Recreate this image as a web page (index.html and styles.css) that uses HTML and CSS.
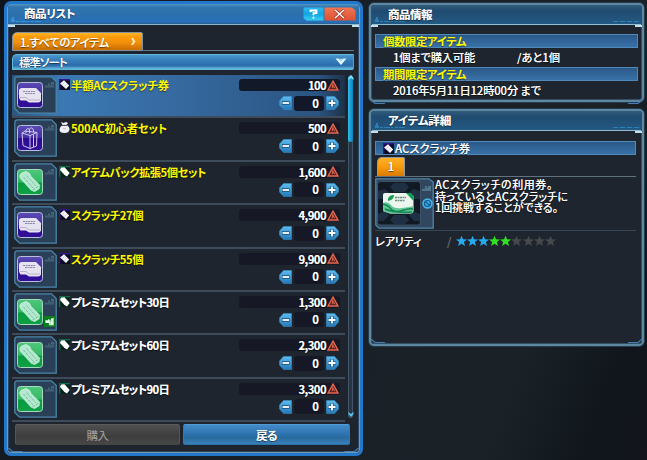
FILE: index.html
```html
<!DOCTYPE html>
<html lang="ja">
<head>
<meta charset="utf-8">
<title>商品リスト</title>
<link rel="stylesheet" href="styles.css">
</head>
<body>
<svg class="defs" width="0" height="0">
  <defs>
    <linearGradient id="gp" x2="0" y2="1"><stop offset="0" stop-color="#5b4bb5"/><stop offset=".5" stop-color="#43309f"/><stop offset=".52" stop-color="#2c0a92"/><stop offset="1" stop-color="#32109a"/></linearGradient>
    <linearGradient id="gg" x2="0" y2="1"><stop offset="0" stop-color="#4fc77b"/><stop offset=".5" stop-color="#35b866"/><stop offset=".54" stop-color="#089a3e"/><stop offset="1" stop-color="#0fa145"/></linearGradient>
    <linearGradient id="gb" x2="0" y2="1"><stop offset="0" stop-color="#5cbcf0"/><stop offset="1" stop-color="#2478b8"/></linearGradient>
    <symbol id="frame" viewBox="0 0 43 38">
      <path d="M.8 3.5Q.8.8 3.5.8H37.5L42.2 5.500V37.200H5.500L.8 32.500Z" fill="#2a3f58" stroke="#4a86aa" stroke-width="1.300"/>
      <path d="M31 11.500V9.500H34V7.500H36V9H37V6H40V11.500Z" fill="#45657a"/>
      <path d="M32 10H40M35 8.500H40" stroke="#2f4b60" stroke-width=".6"/>
    </symbol>
    <symbol id="card" viewBox="0 0 43 38">
      <use href="#frame"/>
      <rect x="3.500" y="6.500" width="25" height="25" rx="3" fill="url(#gp)" stroke="#b9bedb"/>
      <path d="M5 14Q5.500 12 8 12H22L27 17V24.500Q26.500 26.500 24 26.500H15L12 24.500H6.500L5 22Z" fill="#e6e3f0"/>
      <path d="M9 15.500H21M11 17.500H21" stroke="#8b83a8" stroke-width="1" stroke-dasharray="2 .6"/>
      <path d="M6 21.500H12L15 24H26" fill="none" stroke="#b8b1ce" stroke-width="1"/>
    </symbol>
    <symbol id="bag" viewBox="0 0 43 38">
      <use href="#frame"/>
      <rect x="3.500" y="6.500" width="25" height="25" rx="3" fill="url(#gp)" stroke="#b9bedb"/>
      <path d="M8 14L11 12L23 13.500L22.500 27L16 29.500L9 26.500ZM8 14L16 16.500V29.500M16 16.500L23 13.500M19.500 15.500V28M12 14V11Q13.500 8 15.500 10.500V14.500M15 10.500Q17.500 7 19.500 11V13" fill="none" stroke="#d6d2ef" stroke-width=".95"/>
    </symbol>
    <symbol id="ticket" viewBox="0 0 43 38">
      <use href="#frame"/>
      <rect x="3.500" y="6.500" width="25" height="25" rx="3" fill="url(#gg)" stroke="#a9d9be"/>
      <path d="M5.500 13.500L7 10.500L12 8.500L15.500 10.500L17 13.500L26 22.500L25.500 26L20.500 29L17 27.500L6 15.500Z" fill="#b4e9d0"/>
      <path d="M9.500 14L19 25M12.500 12.500L22 23M18.500 27L25 23" stroke="#78bfa0" stroke-width="1" stroke-dasharray="3 1"/>
      <path d="M5.500 13.500L7 10.500L12 8.500L15.500 10.500L17 13.500L26 22.500" fill="none" stroke="#d6f7e7" stroke-width=".8"/>
    </symbol>
    <symbol id="gift" viewBox="0 0 12 12"><path d="M0 0H12V12H0Z" fill="#0a7d1c"/><path d="M1.500 4.500H4.500V3.500H6V5H7.500V3L10.500 2V10H5.500V7.500H1.500Z" fill="#e9fff0"/><path d="M7 5.500V10M6 5.500H10.500" stroke="#7bc08b" stroke-width=".6"/></symbol>
    <symbol id="tagp" viewBox="0 0 11 11"><path d="M0 0H11V11H0Z" fill="#0c0a1d"/><path d="M.7 11V.7H11" fill="none" stroke="#31158a" stroke-width="1.500"/><path d="M1 4.500L5 1.200L10.200 6.500L7 10Z" fill="#f6f4ff"/><path d="M5.500 3.500L3.500 5.500M7.500 5.500L5.500 7.500" stroke="#b8aed0" stroke-width=".7"/></symbol>
    <symbol id="tagg" viewBox="0 0 11 11"><path d="M0 0H11V11H0Z" fill="#08231b"/><path d="M.7 11V.7H11" fill="none" stroke="#087047" stroke-width="1.300"/><path d="M1 4L2 1.500L5.500 1.200L10.700 7L8 10.500L5.500 9Z" fill="#fff"/></symbol>
    <symbol id="pouch" viewBox="0 0 11 11"><path d="M2 0L4.500 1L7 0L9 1L7.500 3Q10.500 4.500 10.500 7.500Q10 11 5.500 11Q.5 11 .5 7.500Q.5 5 3.500 3Z" fill="#f1f0f6"/><path d="M3 3.400H8" stroke="#2a283a" stroke-width=".9"/><path d="M4 6L5.500 7L7 6" stroke="#9d99aa" fill="none" stroke-width=".7"/></symbol>
    <symbol id="ac" viewBox="0 0 12 11"><path d="M6 1.200L10.900 10H1.100Z" fill="#41191c" stroke="#e66850" stroke-width="1.400"/><path d="M6 3.500L5 8.500M6 5L8 8.500M5 7H7" stroke="#e66850" stroke-width=".9"/></symbol>
    <symbol id="minus" viewBox="0 0 13 14"><path d="M4.500 .5H12.500V13.500H4.500L.5 9V5Z" fill="url(#gb)" stroke="#3d98cf" stroke-width=".5"/><path d="M3 7H10.500" stroke="#174e7a" stroke-width="3.500"/><path d="M3.500 7H10" stroke="#fff" stroke-width="1.800"/></symbol>
    <symbol id="plus" viewBox="0 0 13 14"><path d="M.5 .5H8.500L12.500 5V9L8.500 13.500H.5Z" fill="url(#gb)" stroke="#3d98cf" stroke-width=".5"/><path d="M2 7H10M6 3V11" stroke="#174e7a" stroke-width="3.200"/><path d="M2.500 7H9.500M6 3.500V10.500" stroke="#fff" stroke-width="1.800"/></symbol>
    <symbol id="star" viewBox="0 0 12 12"><path d="M6 .2L7.600 4.100L12 4.400L8.600 7.100L9.700 11.500L6 9.100L2.300 11.500L3.400 7.100L0 4.400L4.400 4.100Z"/></symbol>
    <symbol id="deco" viewBox="0 0 32 8"><path d="M1 7V4H2V2H4V5H5V7Z" fill="#3a9bd8" opacity=".8"/><path d="M6 6.500H31" stroke="#39a0dc" stroke-width="1" stroke-dasharray="3 1 6 1 2 2" opacity=".8"/></symbol>
  </defs>
</svg>

<main class="screen">
  <section class="window shop">
    <header class="titlebar"><svg class="deco"><use href="#deco"/></svg><h1><span data-w="51">商品リスト</span></h1>
      <svg class="winbtns" viewBox="0 0 53 14">
        <defs><linearGradient id="hc" x2="0" y2="1"><stop stop-color="#2fb9f0"/><stop offset=".5" stop-color="#16a4e4"/><stop offset="1" stop-color="#35d2f5"/></linearGradient>
        <linearGradient id="hr" x2="0" y2="1"><stop stop-color="#f07551"/><stop offset="1" stop-color="#dc5132"/></linearGradient></defs>
        <path d="M.5 .5H20.500V13.500H3.500L.5 11Z" fill="url(#hc)"/><path d="M21.500 .5H49L52.500 3.500V13.500H21.500Z" fill="url(#hr)"/>
        <path d="M32 3L41 11M41 3L32 11" stroke="#922f25" stroke-width="3"/><path d="M32 3L41 11M41 3L32 11" stroke="#fff" stroke-width="1.500"/>
        <path d="M7.500 5V3.500H13.500V6.200H10.500V8.200M10.500 9.700V11.500" fill="none" stroke="#fff" stroke-width="1.800"/>
      </svg>
    </header>
    <div class="tabs"><div class="tab"><span data-w="89">1.すべてのアイテム</span><svg viewBox="0 0 5 7"><path d="M0 0L2 0L4.500 3.500L2 7H0L2 3.500Z" fill="#ffe9bb"/></svg></div></div>
    <div class="sort"><span data-w="48">標準ソート</span><svg viewBox="0 0 12 8"><path d="M.5 .5H3.500L6 3L8.500 .5H11.500L6 7Z" fill="#e8faff"/><path d="M3 .8H9L6 3.500Z" fill="#9fdcf5"/></svg></div>
    <div class="listwrap">
      <ul class="list" id="list"></ul>
      <div class="scroll"><i class="thumb"></i><svg class="up" viewBox="0 0 6 5"><path d="M.5 5L3 3L5.500 5V3L3 0L.5 3Z" fill="#7fe0fa"/></svg><svg class="down" viewBox="0 0 6 5"><path d="M.5 0L3 2L5.500 0V2L3 5L.5 2Z" fill="#4fc9f0"/></svg></div>
    </div>
    <footer class="actions"><button class="buy"><span data-w="22">購入</span></button><button class="back"><span data-w="21">戻る</span></button></footer>
    <svg class="corners" viewBox="0 0 352 5"><path d="M1 0L5 3.500H15M351 0L347 3.500H337" fill="none" stroke="#467db6" stroke-width="1.200"/></svg>
  </section>

  <div class="side">
    <section class="window pane info">
      <header class="titlebar"><svg class="deco"><use href="#deco"/></svg><h2><span data-w="44">商品情報</span></h2><i class="dots"></i></header>
      <div class="body">
        <div class="band yellow"><span data-w="83">個数限定アイテム</span></div>
        <p class="line"><span data-w="82">1個まで購入可能</span><span class="rest"><span data-w="43">/あと1個</span></span></p>
        <div class="band yellow"><span data-w="83">期間限定アイテム</span></div>
        <p class="line"><span data-w="148">2016年5月11日12時00分 まで</span></p>
      </div>
      <svg class="corners" viewBox="0 0 272 5"><path d="M0 0L4 3.500H14M272 0L268 3.500H258" fill="none" stroke="#467db6" stroke-width="1.200"/></svg>
    </section>
    <section class="window pane detail">
      <header class="titlebar"><svg class="deco"><use href="#deco"/></svg><h2><span data-w="63">アイテム詳細</span></h2><i class="dots"></i></header>
      <div class="body">
        <div class="band item"><svg class="tag"><use href="#tagp"/></svg><span data-w="75">ACスクラッチ券</span></div>
        <div class="pages"><div class="page">1</div></div>
        <div class="desc">
          <svg class="preview" viewBox="0 0 59 51">
            <path d="M.8 .8H54L58.200 4V50.200H4L.8 47Z" fill="#30475f" stroke="#5186a8" stroke-width="1.300"/>
            <rect x="2.500" y="3.500" width="43" height="43.500" rx="3" fill="#111925" stroke="#3e5268"/>
            <path d="M15 9L19 5H30L34 9L30 14H19ZM3 13L10 11L14 15L10 21H3ZM45 13L38 11L34 15L38 21H45ZM15 42L19 37H30L34 42L30 46H19ZM3 36L10 33L14 37L9 43H3ZM45 36L38 33L34 37L39 43H45Z" fill="#203044"/>
            <path d="M8 17Q8 15 10 15H35L38.500 18V33Q38 35 36 35.500H15L8 33Z" fill="#edf5ef"/>
            <path d="M8 25Q13 23 16 27T27 30T38.500 28V33Q38 35 36 35.500H15L8 33Z" fill="#64c895"/>
            <path d="M8 26Q13 27 16 31T27 32.500T38 31M10 31Q18 35 37 34" fill="none" stroke="#138658" stroke-width="1.500"/>
            <path d="M13 21Q14 17 19 17Q19 22 13 23ZM31 15H36L38.500 18V23Z" fill="#159b52"/>
            <path d="M20 19.500H31M20 22.500H30" stroke="#6e8f7b" stroke-width="1.300" stroke-dasharray="2 .5"/>
            <circle cx="52.500" cy="25.500" r="5.200" fill="#43b4ec"/><circle cx="52.500" cy="25.500" r="3" fill="none" stroke="#14588b" stroke-width="1.200"/><path d="M50.500 23.500L54.500 27.500" stroke="#14588b" stroke-width="1.200"/>
            <path d="M47 13V11H50V8H52V10H53V8H56V13Z" fill="#50758a"/>
          </svg>
          <p class="text"><span data-w="118">ACスクラッチの利用券。</span><span data-w="133">持っているとACスクラッチに</span><span data-w="123">1回挑戦することができる。</span></p>
        </div>
        <div class="rarity"><span class="label"><span data-w="46">レアリティ</span></span><span class="slash">/</span><div class="stars" id="stars"></div></div>
      </div>
      <svg class="corners" viewBox="0 0 272 5"><path d="M0 0L4 3.500H14M272 0L268 3.500H258" fill="none" stroke="#467db6" stroke-width="1.200"/></svg>
    </section>
  </div>
</main>
<script src="app.js"></script>
</body>
</html>
```
FILE: styles.css
```css
* { box-sizing: border-box; }
body {
  margin: 0; width: 647px; height: 460px; overflow: hidden; color: #fff;
  font: 500 11.3px/16px "Noto Sans CJK JP", "Liberation Sans", sans-serif;
  background: linear-gradient(110deg, #10151b 0%, #191f26 45%, #1a2228 80%, #10161c 92%, #14151d 100%);
}
h1, h2, p, ul { margin: 0; padding: 0; }
span { white-space: nowrap; }
[data-w] { display: inline-block; }
svg { display: block; flex: none; }
.defs { position: absolute; }
.screen { display: flex; gap: 6px; padding: 1px 3px 0 4px; align-items: flex-start; font-feature-settings: "palt"; text-shadow: 0 0 .6px #fff8, 0 1px 1px #0008; }
.window { display: flex; flex-direction: column; background: #1e252e; }
.shop { width: 359px; height: 455px; border: 3px solid #2178cb; border-radius: 7px; box-shadow: inset 0 0 0 1px #7898ad, inset 0 0 0 2px #2b455c; }
.titlebar { display: flex; align-items: center; height: 21px; flex: none; }
h1, h2 { font-size: 11.500px; line-height: 16px; font-weight: 700; padding-bottom: 2px; }
.shop .titlebar {
  margin: 0 1px; padding-right: 3px; border-radius: 4px 4px 0 0; border-bottom: 1px solid #8fb9cc;
  background: linear-gradient(#5296c6, #3176ae 15%, #2c6fac 55%, #2871bc 90%, #2a5c8a);
}
.deco { width: 32px; height: 8px; margin: 9px -18px 0 2px; }
.shop h1 { margin: 0 auto 0 0; }
.winbtns { width: 53px; height: 14px; margin-bottom: 1px; }
.titlebar + * { background: linear-gradient(#c5dfe9, #c5dfe9) 0 0 / 7px 2px no-repeat, linear-gradient(#c5dfe9, #c5dfe9) 100% 0 / 7px 2px no-repeat; }
.tabs { height: 26px; margin: 0 1px; padding: 7px 5px 0 4px; flex: none; }
.tabs { display: flex; align-items: flex-start; }
.tabs::after { content: ""; flex: 1; align-self: flex-end; height: 1px; background: #62788a; }
.tab { display: flex; align-items: center; justify-content: space-between; width: 131px; height: 19px; padding: 0 6px 0 7px; background: linear-gradient(#ffb324, #fb9a0b 25%, #f39008 55%, #c76c05); border: 1px solid #8293a0; border-radius: 5px 2px 0 0; }
.tab svg { width: 5px; height: 7px; }
.sort { display: flex; align-items: center; justify-content: space-between; height: 16px; flex: none; margin: 3px 6px 0 5px; padding: 0 6px 0 6px; background: linear-gradient(#4b98ca, #3b85c0 25%, #2b6cac 75%, #66bddd); border: 1px solid #62b8dc; border-right-color: #4ba0cd; border-radius: 5px 0 2px 0; }
.sort svg { width: 12px; height: 8px; }
.listwrap { display: flex; height: 353px; margin-left: 5px; padding-top: 5px; flex: none; }
.list { width: 333px; list-style: none; }
.row { display: flex; height: 43.4px; padding: 1px 2px 0 2px; border-bottom: 2px solid #3e4b5b; }
.row.selected { background: linear-gradient(90deg, #2d5680, #3b79b4 15%, #36699f 50%, #2a5481 92%, #1e3248); }
.row .box { position: relative; width: 43px; height: 38px; margin-right: 2px; }
.box svg { width: 43px; height: 38px; }
.box .gift { position: absolute; right: 2px; bottom: 4px; width: 11px; height: 11px; }
.tag { width: 11px; height: 11px; margin-top: 3px; }
.name { width: 168px; margin: 1px 0 0 1px; font-weight: 700; }
.limited .name, .yellow { color: #fff800; text-shadow: 0 1px 1px #0008; }
.yellow { font-weight: 700; }
.qty { width: 101px; margin-top: 3px; }
.price { display: flex; justify-content: flex-end; align-items: center; width: 101px; height: 12px; padding-right: 1px; gap: 1px; background: #121a2a; border-radius: 3px; font-weight: 700; }
.price svg { width: 12px; height: 11px; }
.step { display: flex; justify-content: flex-end; align-items: center; gap: 2px; margin-top: 4px; height: 16px; padding-right: 1px; }
.step svg { width: 13px; height: 14px; }
.count { width: 30px; height: 15px; padding-right: 5px; text-align: right; font-weight: 700; line-height: 15px; background: #121829; border-radius: 3px; }
.row:not(.selected) .price, .row:not(.selected) .count { background: #161925; }
.scroll { position: relative; width: 5px; height: 343px; margin-left: 3px; background: #263645; border: 1px solid #415566; border-radius: 2px; }
.thumb { position: absolute; left: -1px; top: 0; width: 5px; height: 66px; background: linear-gradient(90deg, #36b7e8, #0783bd); border-radius: 3px; }
.up, .down { position: absolute; left: -1px; width: 6px; height: 5px; }
.up { top: -1px; }
.down { bottom: 0; }
.actions { display: flex; gap: 3px; margin: 1px 0 0 8px; }
button { height: 21px; border: 1px solid; border-radius: 2px; padding: 0; font: 500 11.500px/18px "Noto Sans CJK JP", sans-serif; color: #fff; text-shadow: inherit; }
.buy { width: 165px; color: #999; text-shadow: none; border-color: #5b5b5b #555 #454545; background: linear-gradient(#505050, #3d3d3d 60%, #474747); }
.back { width: 167px; font-weight: 700; border-color: #4e9dd5 #3678ac #2872a8; background: linear-gradient(#438bc8, #2d72af 50%, #286a9c 65%, #3a80ba); }
.corners { height: 5px; margin-top: auto; align-self: stretch; }
.side { display: flex; flex-direction: column; gap: 7px; width: 275px; padding-top: 2px; }
.pane { border: 2px solid #5e87a4; border-radius: 5px; box-shadow: 0 0 0 1px #253d4b, inset 0 0 0 1px #344f62; }
.info { height: 99px; }
.detail { height: 237px; }
.pane .titlebar { height: 20px; background: linear-gradient(#315c7a, #214b70 30%, #225984); border-bottom: 1px solid #8fbed0; margin: 0 1px; }
.pane .deco { margin-left: 2px; margin-right: -18px; opacity: .7; }
.pane h2 { margin-right: auto; padding-bottom: 1px; }
.dots { width: 26px; height: 1px; margin: 13px 2px 0 0; background: repeating-linear-gradient(90deg, #2d81b8 0 5px, #235f8c 5px 7px); }
.body { padding: 9px 4px 0; }
.detail .body { padding-top: 10px; }
.band { display: flex; height: 14px; align-items: center; padding: 0 7px; background: linear-gradient(#2b5988, #3871a8); border: 1px solid #5089b9; }
.info .line { display: flex; height: 19px; padding: 1px 0 0 18px; }
.rest { margin-left: auto; width: 121px; }
.detail .band { width: 261px; }
.detail .tag { margin: 0 1px 0 0; }
.pages { height: 22px; width: 261px; padding: 2px 0 0 2px; border-bottom: 1px solid #61727f; }
.page { width: 28px; height: 19px; text-align: center; line-height: 17px; border: 1px solid #91999b; border-bottom: 0; border-radius: 5px 2px 0 0; background: linear-gradient(#ffb126, #f69b0d 50%, #d97904); }
.desc { display: flex; width: 261px; height: 54px; padding-top: 1px; gap: 1px; border-bottom: 1px solid #374654; }
.preview { width: 59px; height: 51px; }
.text { display: flex; flex-direction: column; align-items: flex-start; font-size: 11px; line-height: 11.500px; padding-top: 1px; }
.rarity { display: flex; align-items: center; height: 19px; }
.label { width: 70px; }
.slash { width: 11px; color: #6d777e; padding-left: 2px; text-shadow: none; }
.stars { display: flex; }
.stars svg { width: 11.100px; height: 12px; fill: #46494b; }
.stars .blue { fill: #27a9ed; }
.stars .green { fill: #31e121; }
```
FILE: app.js
```js
const items = [
  ["card", "tagp", "半額ACスクラッチ券", 98, "100", true],
  ["bag", "pouch", "500AC初心者セット", 96, "500", true],
  ["ticket", "tagg", "アイテムパック拡張5個セット", 135, "1,600", true],
  ["card", "tagp", "スクラッチ27個", 72, "4,900", true],
  ["card", "tagp", "スクラッチ55個", 72, "9,900", true],
  ["ticket", "tagg", "プレミアムセット30日", 98, "1,300", false],
  ["ticket", "tagg", "プレミアムセット60日", 98, "2,300", false],
  ["ticket", "tagg", "プレミアムセット90日", 98, "3,300", false]
];
const icon = (id, cls = "") => `<svg class="${cls}"><use href="#${id}"/></svg>`;
document.getElementById("list").innerHTML = items.map(([art, tag, name, width, price, limited], i) => `
  <li class="row${i === 0 ? " selected" : ""}${limited ? " limited" : ""}">
    <div class="box">${icon(art)}${i === 5 ? icon("gift", "gift") : ""}</div>
    ${icon(tag, "tag")}<div class="name"><span data-w="${width}">${name}</span></div>
    <div class="qty"><div class="price"><span data-w="${price.length > 3 ? 27.5 : 18}">${price}</span>${icon("ac")}</div>
    <div class="step">${icon("minus")}<div class="count">0</div>${icon("plus")}</div></div>
  </li>`).join("");
document.getElementById("stars").innerHTML = Array.from({ length: 9 }, (_, i) =>
  icon("star", i < 3 ? "blue" : i < 5 ? "green" : "")).join("");

document.querySelectorAll("[data-w]").forEach(el => {
  const gap = (el.dataset.w - el.getBoundingClientRect().width) / el.textContent.length;
  el.style.letterSpacing = gap.toFixed(3) + "px";
});
```
